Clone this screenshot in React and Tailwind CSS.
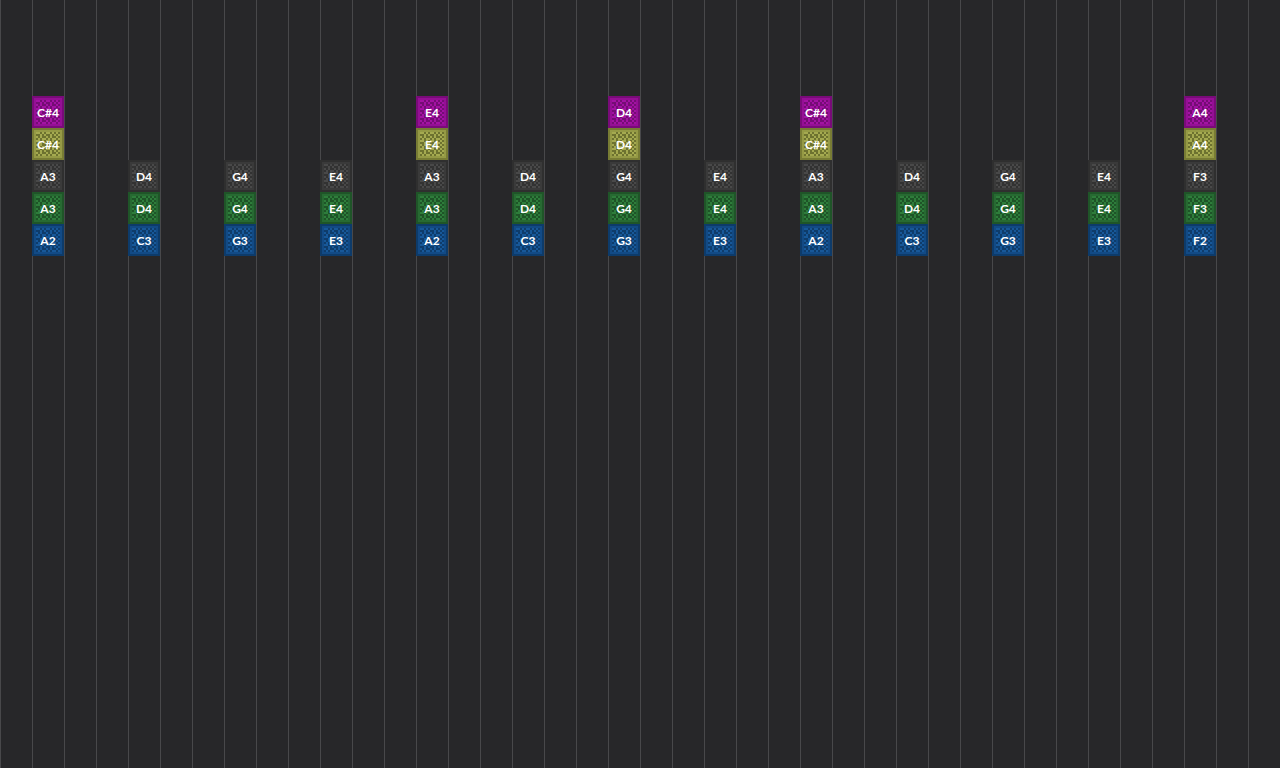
// 16x16 note texture: # frame, o inner edge, x dark dot, . face
const TEXTURE = [
  "################",
  "#oooooooooooooo#",
  "#o..x.x..x.x.xo#",
  "#oxx.x.xx.x.x.o#",
  "#o.x.xx.x.xx.xo#",
  "#ox.x..x.x..x.o#",
  "#o..x.x..x.x.xo#",
  "#oxx.x.xx.x.x.o#",
  "#o.x.xx.x.xx.xo#",
  "#ox.x..x.x..x.o#",
  "#o..x.x..x.x.xo#",
  "#oxx.x.xx.x.x.o#",
  "#o.x.xx.x.xx.xo#",
  "#ox.x..x.x..x.o#",
  "#oooooooooooooo#",
  "################",
];

const TONES = {
  magenta: { frame: "fill-[#790b79]", edge: "fill-[#950f95]", face: "fill-[#a312a3]", dot: "fill-[#750c75]" },
  olive: { frame: "fill-[#787c34]", edge: "fill-[#959a45]", face: "fill-[#a5aa50]", dot: "fill-[#6d722f]" },
  gray: { frame: "fill-[#2f2f2f]", edge: "fill-[#3a3a3a]", face: "fill-[#494949]", dot: "fill-[#323232]" },
  green: { frame: "fill-[#1f5528]", edge: "fill-[#276a32]", face: "fill-[#2e7d3b]", dot: "fill-[#1e5427]" },
  blue: { frame: "fill-[#0d3b6a]", edge: "fill-[#124a85]", face: "fill-[#175899]", dot: "fill-[#0e3c6b]" },
};

const ROWS = [
  { tone: "magenta", notes: { 1: "C#4", 13: "E4", 19: "D4", 25: "C#4", 37: "A4" } },
  { tone: "olive", notes: { 1: "C#4", 13: "E4", 19: "D4", 25: "C#4", 37: "A4" } },
  {
    tone: "gray",
    notes: { 1: "A3", 4: "D4", 7: "G4", 10: "E4", 13: "A3", 16: "D4", 19: "G4", 22: "E4", 25: "A3", 28: "D4", 31: "G4", 34: "E4", 37: "F3" },
  },
  {
    tone: "green",
    notes: { 1: "A3", 4: "D4", 7: "G4", 10: "E4", 13: "A3", 16: "D4", 19: "G4", 22: "E4", 25: "A3", 28: "D4", 31: "G4", 34: "E4", 37: "F3" },
  },
  {
    tone: "blue",
    notes: { 1: "A2", 4: "C3", 7: "G3", 10: "E3", 13: "A2", 16: "C3", 19: "G3", 22: "E3", 25: "A2", 28: "C3", 31: "G3", 34: "E3", 37: "F2" },
  },
];

const Texture = ({ tone }) => {
  const colors = TONES[tone];
  const kinds = { "#": colors.frame, o: colors.edge, x: colors.dot, ".": colors.face };

  return (
    <svg viewBox="0 0 16 16" shapeRendering="crispEdges" className="absolute inset-0 size-8" aria-hidden="true">
      {TEXTURE.map((line, y) =>
        line.split("").map((kind, x) => (
          <rect key={`${x}-${y}`} x={x} y={y} width="1" height="1" className={kinds[kind]} />
        ))
      )}
    </svg>
  );
};

const Note = ({ tone, label, column }) => (
  <button
    type="button"
    className="relative row-start-1 flex size-8 items-center justify-center pt-0.5"
    style={{ gridColumnStart: column + 1 }}
  >
    <Texture tone={tone} />
    <span className="relative text-xs font-bold text-white">{label}</span>
  </button>
);

const App = () => (
  <main className="min-h-screen overflow-hidden bg-[#272729] bg-[linear-gradient(to_right,#48484a_1px,transparent_1px)] bg-[length:32px_100%] pt-24 font-['Lato',sans-serif]">
    {ROWS.map((row) => (
      <div key={row.tone} className="grid h-8 auto-cols-[32px] grid-flow-col">
        {Object.entries(row.notes).map(([column, label]) => (
          <Note key={column} tone={row.tone} label={label} column={Number(column)} />
        ))}
      </div>
    ))}
  </main>
);

export default App;
